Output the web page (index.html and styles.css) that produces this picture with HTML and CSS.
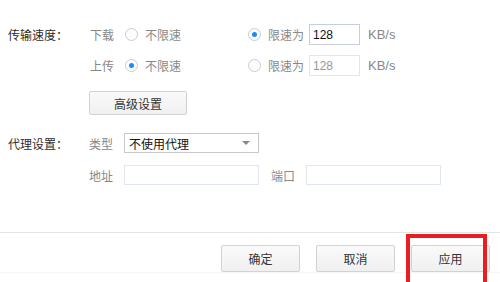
FILE: index.html
```html
<!DOCTYPE html>
<html lang="zh">
<head>
<meta charset="utf-8">
<link rel="stylesheet" href="styles.css">
</head>
<body>
<div class="page">
  <div class="content">
    <div class="row row-first">
      <div class="label">传输速度：</div>
      <div class="sub">下载</div>
      <span class="radio"></span>
      <span class="opt opt-free">不限速</span>
      <span class="radio checked"></span>
      <span class="opt">限速为</span>
      <span class="input speed">128</span>
      <span class="unit">KB/s</span>
    </div>
    <div class="row row-second">
      <div class="label"></div>
      <div class="sub">上传</div>
      <span class="radio checked"></span>
      <span class="opt opt-free">不限速</span>
      <span class="radio"></span>
      <span class="opt">限速为</span>
      <span class="input speed disabled">128</span>
      <span class="unit">KB/s</span>
    </div>
    <div class="adv-row">
      <button class="btn adv">高级设置</button>
    </div>
    <div class="row row-proxy">
      <div class="label">代理设置：</div>
      <div class="sub sub-proxy">类型</div>
      <div class="select"><span>不使用代理</span><span class="caret"></span></div>
    </div>
    <div class="row row-addr">
      <div class="label"></div>
      <div class="sub sub-proxy">地址</div>
      <span class="input wide"></span>
      <span class="sub port-label">端口</span>
      <span class="input wide"></span>
    </div>
  </div>
  <div class="footer">
    <button class="btn foot">确定</button>
    <button class="btn foot">取消</button>
    <button class="btn foot apply">应用</button>
  </div>
  <div class="highlight"></div>
</div>
</body>
</html>
```

FILE: styles.css
```css
html, body {
  margin: 0;
  padding: 0;
  background: #fff;
}
.page {
  position: relative;
  width: 500px;
  height: 282px;
  overflow: hidden;
  font-family: "Noto Sans CJK SC", "Noto Sans", sans-serif;
  font-size: 12px;
  color: #333;
}
.content {
  padding: 24px 0 0 8px;
  height: 208px;
  box-sizing: border-box;
}
.row {
  display: flex;
  align-items: center;
  height: 21px;
}
.row-second {
  margin-top: 10px;
}
.label {
  width: 82px;
  color: #2b2b2b;
  flex: none;
}
.sub {
  color: #888;
  width: 35px;
  flex: none;
}
.sub-proxy {
  width: 33px;
  margin-left: -1px;
  padding-left: 0;
}
.radio {
  width: 13px;
  height: 13px;
  box-sizing: border-box;
  border: 1px solid #c9ccd2;
  border-radius: 50%;
  background: #fbfcfe;
  flex: none;
  position: relative;
  margin-right: 7px;
}
.radio.checked::after {
  content: "";
  position: absolute;
  left: 3px;
  top: 3px;
  width: 5px;
  height: 5px;
  border-radius: 50%;
  background: #1b8cf2;
}
.opt {
  color: #888;
  flex: none;
}
.opt-free {
  width: 103px;
}
.input {
  box-sizing: border-box;
  height: 21px;
  border: 1px solid #c3cfdf;
  background: #fff;
  display: flex;
  align-items: center;
  padding-left: 3px;
  color: #111;
  font-family: "Liberation Sans", Arial, sans-serif;
  font-size: 12px;
  flex: none;
}
.speed {
  width: 51px;
  margin-left: 5px;
}
.speed.disabled {
  border-color: #e1e6ee;
  color: #999;
}
.unit {
  margin-left: 8px;
  color: #888;
  font-family: "Liberation Sans", Arial, sans-serif;
  font-size: 13px;
}
.adv-row {
  margin-top: 15px;
  padding-left: 81px;
}
.btn {
  font-family: "Noto Sans CJK SC", "Noto Sans", sans-serif;
  font-size: 12px;
  color: #333;
  background: linear-gradient(#fafafa, #f0f0f0);
  border: 1px solid #d2d2d2;
  border-radius: 2px;
  padding: 0;
  margin: 0;
}
.adv {
  width: 98px;
  height: 24px;
}
.row-proxy {
  margin-top: 18px;
  height: 20px;
}
.select {
  box-sizing: border-box;
  width: 135px;
  height: 20px;
  border: 1px solid #c8c8c8;
  display: flex;
  align-items: center;
  justify-content: space-between;
  padding: 0 8px 0 4px;
  color: #111;
  margin-left: 2px;
}
.caret {
  width: 0;
  height: 0;
  border-left: 4px solid transparent;
  border-right: 4px solid transparent;
  border-top: 4px solid #8a8a8a;
}
.row-addr {
  margin-top: 12px;
  height: 20px;
}
.row-addr .input {
  height: 20px;
  border-color: #dfe6ef;
}
.row-addr .sub-proxy + .input {
  margin-left: 2px;
}
.wide {
  width: 135px;
}
.port-label {
  margin-left: 12px;
}
.footer {
  border-top: 1px solid #e4e4e4;
  box-shadow: 0 1px 1px rgba(0,0,0,0.03);
  margin-top: 24px;
  display: flex;
  justify-content: flex-end;
  gap: 16px;
  padding: 12px 10px 0 0;
}
.foot {
  width: 79px;
  height: 27px;
}
.highlight {
  position: absolute;
  left: 406px;
  top: 234px;
  width: 81px;
  height: 52px;
  box-sizing: border-box;
  border: 4px solid #ea1c24;
}
```
